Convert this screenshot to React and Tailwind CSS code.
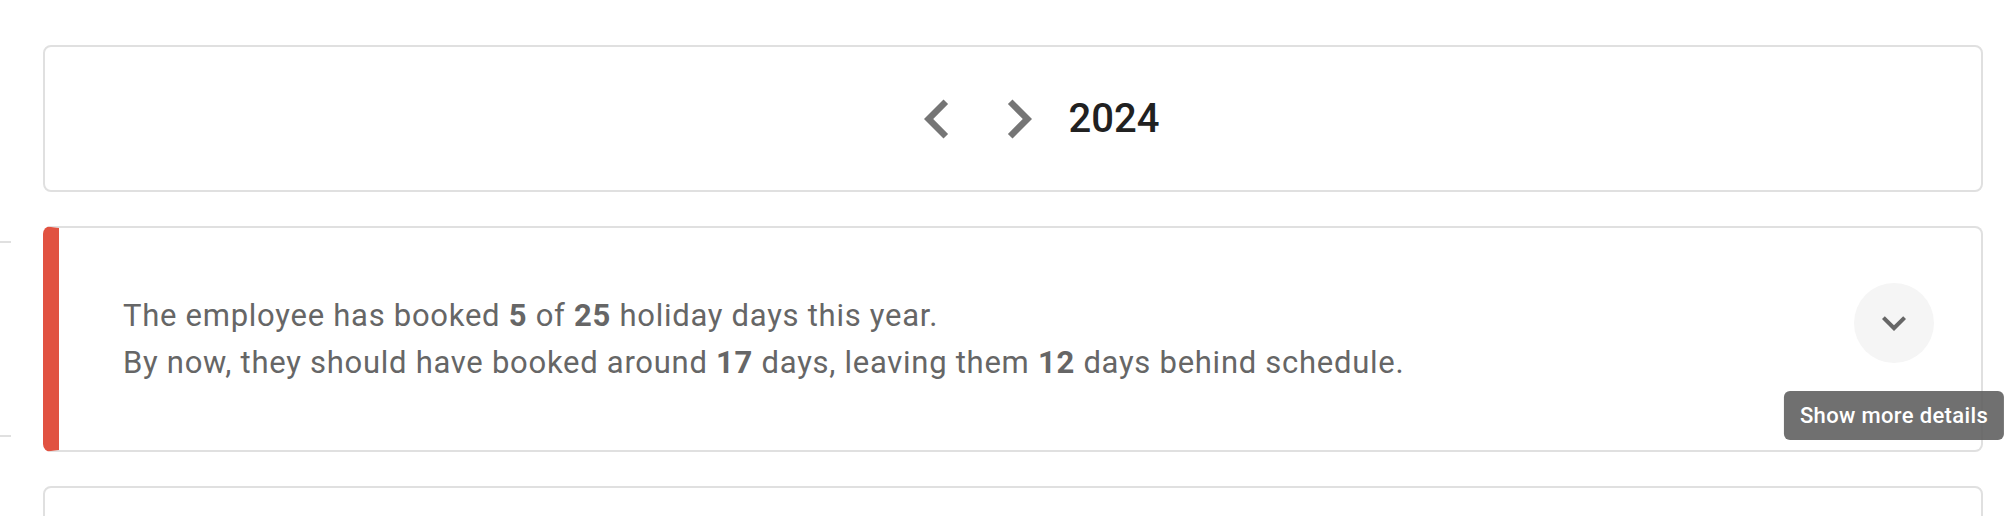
import React from "react";

function ChevronLeft() {
  return (
    <svg width="78" height="78" viewBox="0 0 24 24" fill="#757575">
      <path d="M15.41 7.41L14 6l-6 6 6 6 1.41-1.41L10.83 12z" />
    </svg>
  );
}

function ChevronRight() {
  return (
    <svg width="78" height="78" viewBox="0 0 24 24" fill="#757575">
      <path d="M10 6L8.59 7.41 13.17 12l-4.58 4.59L10 18l6-6z" />
    </svg>
  );
}

function ExpandMore() {
  return (
    <svg width="48" height="48" viewBox="0 0 24 24" fill="#666666">
      <path d="M16.59 8.59L12 13.17 7.41 8.59 6 10l6 6 6-6z" />
    </svg>
  );
}

function YearPicker() {
  return (
    <div className="flex">
      <div className="w-[43px] shrink-0" />
      <div className="flex-1 h-[147px] rounded-lg border-2 border-[#e0e0e0] bg-white flex items-center justify-center pl-[31px]">
        <div className="flex items-center gap-[4px]">
          <button className="w-[78px] h-[78px] flex items-center justify-center">
            <ChevronLeft />
          </button>
          <button className="w-[78px] h-[78px] flex items-center justify-center">
            <ChevronRight />
          </button>
        </div>
        <span className="ml-[11px] text-[40px] leading-none font-medium text-[#212121]">
          2024
        </span>
      </div>
    </div>
  );
}

function HolidaySummary() {
  return (
    <div className="flex mt-[34px]">
      <div className="w-[43px] shrink-0 flex items-center">
        <div className="w-[11px] h-[196px] border-y-2 border-[#e0e0e0]" />
      </div>
      <div className="flex-1 h-[226px] rounded-lg border-2 border-l-[16px] border-[#e0e0e0] border-l-[#e15241] bg-white flex items-start pt-[55px] pl-[64px] pr-[47px]">
        <div className="flex-1 mt-[9px] text-[31px] leading-[47px] text-[#666666] tracking-[0.73px]">
          <p>
            The employee has booked <b className="font-bold">5</b> of{" "}
            <b className="font-bold">25</b> holiday days this year.
          </p>
          <p>
            By now, they should have booked around{" "}
            <b className="font-bold">17</b> days, leaving them{" "}
            <b className="font-bold">12</b> days behind schedule.
          </p>
        </div>
        <div className="relative shrink-0">
          <button className="w-[80px] h-[80px] rounded-full bg-[#f5f5f5] flex items-center justify-center">
            <ExpandMore />
          </button>
          <div className="absolute top-full mt-[28px] left-1/2 -translate-x-1/2 z-10 whitespace-nowrap h-[49px] px-[16px] rounded-md bg-[#616161]/90 text-white text-[22px] tracking-[0.35px] font-medium flex items-center">
            Show more details
          </div>
        </div>
      </div>
    </div>
  );
}

export default function App() {
  return (
    <div
      className="min-h-screen bg-white pt-[45px] pr-[29px] overflow-hidden"
      style={{ fontFamily: "Roboto, 'Noto Sans', sans-serif" }}
    >
      <YearPicker />
      <HolidaySummary />
      <div className="flex mt-[34px]">
        <div className="w-[43px] shrink-0" />
        <div className="flex-1 h-[200px] rounded-lg border-2 border-[#e0e0e0] bg-white" />
      </div>
    </div>
  );
}
